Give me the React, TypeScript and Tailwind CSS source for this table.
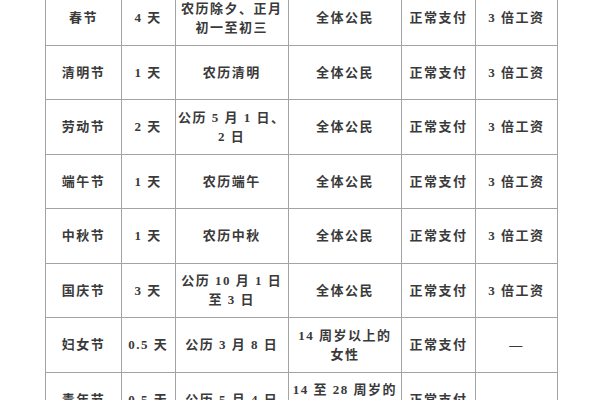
import React from 'react';

type Row = {
  name: string;
  days: string;
  date: string[];
  who: string[];
  pay: string;
  extra: string;
};

const rows: Row[] = [
  { name: '春节', days: '4 天', date: ['农历除夕、正月', '初一至初三'], who: ['全体公民'], pay: '正常支付', extra: '3 倍工资' },
  { name: '清明节', days: '1 天', date: ['农历清明'], who: ['全体公民'], pay: '正常支付', extra: '3 倍工资' },
  { name: '劳动节', days: '2 天', date: ['公历 5 月 1 日、', '2 日'], who: ['全体公民'], pay: '正常支付', extra: '3 倍工资' },
  { name: '端午节', days: '1 天', date: ['农历端午'], who: ['全体公民'], pay: '正常支付', extra: '3 倍工资' },
  { name: '中秋节', days: '1 天', date: ['农历中秋'], who: ['全体公民'], pay: '正常支付', extra: '3 倍工资' },
  { name: '国庆节', days: '3 天', date: ['公历 10 月 1 日', '至 3 日'], who: ['全体公民'], pay: '正常支付', extra: '3 倍工资' },
  { name: '妇女节', days: '0.5 天', date: ['公历 3 月 8 日'], who: ['14 周岁以上的', '女性'], pay: '正常支付', extra: '—' },
  { name: '青年节', days: '0.5 天', date: ['公历 5 月 4 日'], who: ['14 至 28 周岁的', '青年'], pay: '正常支付', extra: '—' },
];

const cell = 'border border-[#a3a3a3] h-[54.5px] p-0 text-center align-middle';

const Lines = ({ items }: { items: string[] }) => (
  <>
    {items.map((t, i) => (
      <div key={i}>{t}</div>
    ))}
  </>
);

const App = () => {
  return (
    <div
      className="h-[400px] w-[600px] overflow-hidden bg-white text-[#3a3a3a]"
      style={{ fontFamily: '"Liberation Serif", "Noto Sans CJK SC", serif' }}
    >
      <table className="ml-[45px] mt-[-10px] w-[512px] table-fixed border-collapse text-[13px] font-bold leading-[19px] tracking-[1.5px]">
        <colgroup>
          <col className="w-[76px]" />
          <col className="w-[53.5px]" />
          <col className="w-[113.5px]" />
          <col className="w-[113px]" />
          <col className="w-[74px]" />
          <col className="w-[82px]" />
        </colgroup>
        <tbody>
          {rows.map((r) => (
            <tr key={r.name}>
              <td className={cell}>{r.name}</td>
              <td className={cell}>{r.days}</td>
              <td className={cell}>
                <Lines items={r.date} />
              </td>
              <td className={cell}>
                <Lines items={r.who} />
              </td>
              <td className={cell}>{r.pay}</td>
              <td className={cell}>{r.extra}</td>
            </tr>
          ))}
        </tbody>
      </table>
    </div>
  );
};

export default App;
